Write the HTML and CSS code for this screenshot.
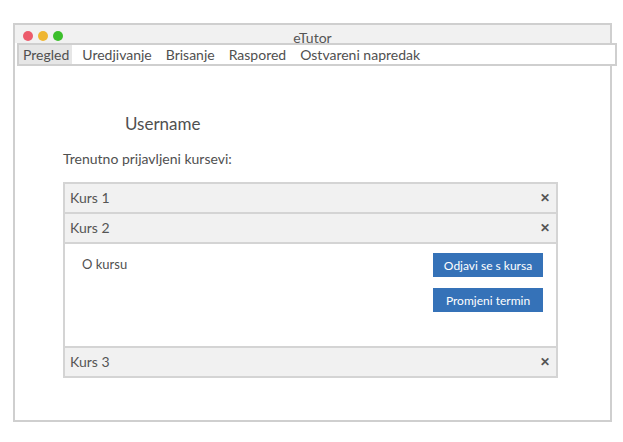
FILE: index.html
```html
<!DOCTYPE html>
<html>
<head>
<meta charset="utf-8">
<link rel="stylesheet" href="styles.css">
</head>
<body>
<div class="window">
  <div class="titlebar">
    <div class="dots">
      <span class="dot red"></span>
      <span class="dot yellow"></span>
      <span class="dot green"></span>
    </div>
    <div class="title">eTutor</div>
  </div>
  <nav class="menu">
    <span class="item active">Pregled</span>
    <span class="item">Uredjivanje</span>
    <span class="item">Brisanje</span>
    <span class="item">Raspored</span>
    <span class="item">Ostvareni napredak</span>
  </nav>
  <main class="content">
    <h1 class="username">Username</h1>
    <p class="label">Trenutno prijavljeni kursevi:</p>
    <div class="accordion">
      <div class="acc-head"><span>Kurs 1</span><span class="close">&#x2715;</span></div>
      <div class="acc-head"><span>Kurs 2</span><span class="close">&#x2715;</span></div>
      <div class="acc-body">
        <span class="about">O kursu</span>
        <div class="actions">
          <button class="btn">Odjavi se s kursa</button>
          <button class="btn">Promjeni termin</button>
        </div>
      </div>
      <div class="acc-head"><span>Kurs 3</span><span class="close">&#x2715;</span></div>
    </div>
  </main>
</div>
</body>
</html>
```

FILE: styles.css
```css
html, body {
  margin: 0;
  padding: 0;
  background: #ffffff;
}
body {
  font-family: Lato, "Open Sans", sans-serif;
  color: #505050;
  padding: 23px 0 0 13px;
}
.window {
  width: 599px;
  height: 399px;
  box-sizing: border-box;
  border: 2px solid #cfcfcf;
  background: #fff;
}
.titlebar {
  height: 18px;
  background: #f1f1f1;
  position: relative;
  display: flex;
  align-items: center;
  justify-content: center;
}
.dots {
  position: absolute;
  left: 8px;
  top: 6px;
  display: flex;
  gap: 5px;
}
.dot {
  width: 10px;
  height: 10px;
  border-radius: 50%;
  display: block;
}
.red { background: #ec5b6b; }
.yellow { background: #efb631; }
.green { background: #3cbf2b; }
.title {
  font-size: 14px;
  color: #555;
  margin-top: 6px;
  margin-left: 0;
}
.menu {
  margin-left: 2px;
  width: 600px;
  height: 23px;
  box-sizing: border-box;
  border: 2px solid #cfcfcf;
  background: #fff;
  display: flex;
  align-items: stretch;
  font-size: 14px;
  color: #505050;
  position: relative;
}
.item {
  padding: 0 7px 0 4px;
  display: flex;
  align-items: center;
  margin-right: 3px;
}
.item.active {
  background: #e6e6e6;
  padding: 0 3px 0 4px;
  margin-right: 6px;
}
.content {
  padding: 0 0 0 48px;
}
.username {
  font-size: 17px;
  font-weight: normal;
  color: #505050;
  margin: 46px 0 0 62px;
  line-height: 24px;
}
.label {
  font-size: 14px;
  margin: 14px 0 0 0;
  line-height: 18px;
  color: #505050;
}
.accordion {
  margin-top: 14px;
  width: 495px;
  box-sizing: border-box;
  border: 2px solid #d4d4d4;
}
.acc-head {
  height: 30px;
  box-sizing: border-box;
  background: #f1f1f1;
  display: flex;
  align-items: center;
  justify-content: space-between;
  padding: 0 6px 1px 5px;
  font-size: 14px;
  color: #555;
  border-bottom: 2px solid #d4d4d4;
}
.acc-head:last-child {
  border-bottom: none;
  height: 28px;
}
.close {
  font-size: 12px;
  font-weight: bold;
  color: #555;
}
.acc-body {
  height: 104px;
  box-sizing: border-box;
  border-bottom: 2px solid #d4d4d4;
  display: flex;
  justify-content: space-between;
  padding: 9px 13px 0 17px;
  background: #fff;
}
.about {
  font-size: 13px;
  color: #505050;
  margin-top: 3px;
}
.actions {
  display: flex;
  flex-direction: column;
  gap: 11px;
}
.btn {
  width: 110px;
  height: 24px;
  background: #3572b8;
  color: #fff;
  border: none;
  font-family: Lato, "Open Sans", sans-serif;
  font-size: 12px;
  padding: 0;
}
```
